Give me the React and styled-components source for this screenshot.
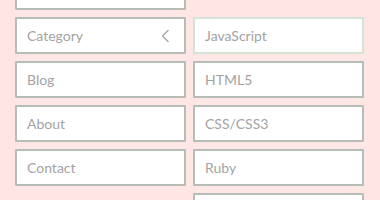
import React from "react";
import styled, { createGlobalStyle } from "styled-components";

const Global = createGlobalStyle`
  html, body { margin: 0; padding: 0; background: #fde6e4; }
  body { font-family: Lato, "Open Sans", sans-serif; overflow: hidden; }
`;

const Page = styled.div`
  display: flex;
  gap: 7px;
  padding-left: 15px;
  margin-top: -27px;
  align-items: flex-start;
`;

const Column = styled.ul`
  list-style: none;
  margin: 0;
  padding: ${(p) => (p.$sub ? "44px 0 0" : "0")};
  display: flex;
  flex-direction: column;
  gap: 7px;
  width: 171px;
`;

const Item = styled.li`
  box-sizing: border-box;
  height: 37px;
  background: #fff;
  border: 2px solid ${(p) => (p.$active ? "#d6e2d6" : "#b6bdb6")};
  border-radius: 1px;
  display: flex;
  align-items: center;
  justify-content: space-between;
  padding: 0 14px 0 10px;
  color: #a3a3a3;
  font-size: 14px;
`;

const Chevron = () => (
  <svg width="9" height="14" viewBox="0 0 9 14" fill="none">
    <path d="M7.5 1 L1.5 7 L7.5 13" stroke="#a3a3a3" strokeWidth="1.3" />
  </svg>
);

const left = ["", "Category", "Blog", "About", "Contact"];
const right = ["JavaScript", "HTML5", "CSS/CSS3", "Ruby", ""];

export default function App() {
  return (
    <>
      <Global />
      <Page>
        <Column>
          {left.map((t, i) => (
            <Item key={i}>
              <span>{t}</span>
              {t === "Category" && <Chevron />}
            </Item>
          ))}
        </Column>
        <Column $sub>
          {right.map((t, i) => (
            <Item key={i} $active={t === "JavaScript"}>
              <span>{t}</span>
            </Item>
          ))}
        </Column>
      </Page>
    </>
  );
}
